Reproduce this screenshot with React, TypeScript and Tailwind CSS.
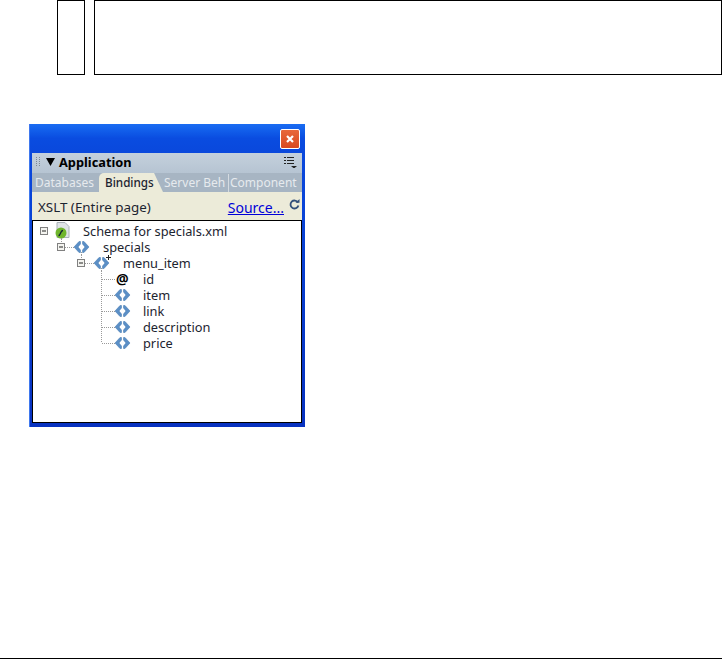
import React from 'react';

const uiFont = "font-['Noto_Sans','DejaVu_Sans',sans-serif]";

const Expander = ({ x }: { x: number }) => (
  <g>
    <rect x={x + 0.5} y={4.5} width={7} height={7} fill="#f4f4f0" stroke="#808080" />
    <line x1={x + 2} x2={x + 6} y1={8} y2={8} stroke="#222" />
  </g>
);

const Dots = ({ x1, y1, x2, y2 }: { x1: number; y1: number; x2: number; y2: number }) => (
  <line x1={x1} y1={y1} x2={x2} y2={y2} stroke="#9a9a9a" strokeDasharray="1 1" />
);

const Tag = ({ x }: { x: number }) => (
  <g fill="#5b8fc6" stroke="#3f74ae" strokeWidth={0.5}>
    <polygon points={`${x},8 ${x + 5},2.5 ${x + 6.5},2.5 ${x + 6.5},5 ${x + 4},8 ${x + 6.5},11 ${x + 6.5},13.5 ${x + 5},13.5`} />
    <polygon points={`${x + 15},8 ${x + 10},2.5 ${x + 8.5},2.5 ${x + 8.5},5 ${x + 11},8 ${x + 8.5},11 ${x + 8.5},13.5 ${x + 10},13.5`} />
  </g>
);

const SchemaGlyph = () => (
  <svg width={50} height={16} className="shrink-0 overflow-visible">
    <Expander x={7} />
    <path d="M24 -0.5h8l4 4v11h-12z" fill="#dfe3e6" stroke="#a9b0b6" />
    <circle cx={28} cy={10} r={5.5} fill="#6fb52c" />
    <path d="M25.5 12.5c2.5 0 1.5-5 4.5-5" fill="none" stroke="#123" strokeWidth={1.3} />
    <Dots x1={28.5} y1={15} x2={28.5} y2={16} />
  </svg>
);

const SpecialsGlyph = () => (
  <svg width={70} height={16} className="shrink-0 overflow-visible">
    <Dots x1={28.5} y1={0} x2={28.5} y2={4} />
    <Expander x={24} />
    <Dots x1={32} y1={8.5} x2={42} y2={8.5} />
    <Tag x={41} />
    <Dots x1={48.5} y1={13} x2={48.5} y2={16} />
  </svg>
);

const MenuItemGlyph = () => (
  <svg width={90} height={16} className="shrink-0 overflow-visible">
    <Dots x1={48.5} y1={0} x2={48.5} y2={4} />
    <Expander x={44} />
    <Dots x1={52} y1={8.5} x2={62} y2={8.5} />
    <Tag x={61} />
    <path d="M75.5 0v5M73 2.5h5" stroke="#222" fill="none" />
    <Dots x1={68.5} y1={13} x2={68.5} y2={16} />
  </svg>
);

const ChildGlyph = ({ attr, last }: { attr?: boolean; last?: boolean }) => (
  <svg width={110} height={16} className="shrink-0 overflow-visible">
    <Dots x1={68.5} y1={0} x2={68.5} y2={last ? 8 : 16} />
    <Dots x1={69} y1={8.5} x2={82} y2={8.5} />
    {attr ? null : <Tag x={82} />}
  </svg>
);

const Row = ({ glyph, label, at }: { glyph: React.ReactNode; label: string; at?: boolean }) => (
  <div className="relative flex h-4 items-center">
    {glyph}
    {at && <span className="absolute left-[83px] top-0 text-[14px] leading-4 font-bold text-black">@</span>}
    <span className="text-[12.8px] leading-4 whitespace-nowrap text-[#1c2430]">{label}</span>
  </div>
);

function Tabs() {
  return (
    <div className="flex h-[19px] items-end overflow-hidden bg-[#a7b5c3] pl-[3px] text-[12px] leading-[18px] whitespace-nowrap text-[#e6eaee]">
      <span className="w-[64px]">Databases</span>
      <span className="h-[19px] w-[64px] rounded-tl-[5px] bg-[#ecebd9] pl-[6px] text-[11.7px] font-medium text-[#1c2430] [clip-path:polygon(0_0,86%_0,100%_100%,0_100%)]">Bindings</span>
      <span className="ml-[1px] w-[65px] border-r border-[#d5dbe1]">Server Beh</span>
      <span className="ml-[1px]">Component</span>
    </div>
  );
}

export default function App() {
  return (
    <div className={`flex h-[659px] flex-col bg-white ${uiFont}`}>
      <div className="flex h-[75px] gap-[9px] pl-[57px]">
        <div className="w-[28px] border border-black" />
        <div className="flex-1 border border-black" />
      </div>

      <div className="mt-[49px] ml-[29px] flex h-[303px] w-[276px] flex-col border-l border-[#3f78ee] bg-gradient-to-b from-[#0a4ae0] to-[#0832c0] pr-[3px] pl-[2px] pb-[4px]">
        <div className="-mr-[3px] -ml-[2px] flex h-[29px] shrink-0 items-center justify-end bg-gradient-to-b from-[#1a6cf2] via-[#0a4ce0] to-[#0a48dc] pr-[5px]">
          <div className="flex h-[20px] w-[20px] items-center justify-center rounded-[2px] border border-white bg-gradient-to-b from-[#e8683a] to-[#d8481f]">
            <svg width={10} height={10} viewBox="0 0 10 10">
              <path d="M2 2l6 6M8 2l-6 6" stroke="#fff" strokeWidth={2.2} />
            </svg>
          </div>
        </div>

        <div className="flex h-[20px] shrink-0 items-center bg-gradient-to-b from-[#c4d0dc] to-[#b6c4d2] pb-[2px] pl-[4px] pr-[5px]">
          <svg width={6} height={12} className="shrink-0">
            <path d="M0.5 1v10M3.5 1v10" stroke="#7d8894" strokeDasharray="1 1" />
          </svg>
          <svg width={9} height={8} className="ml-[4px] shrink-0">
            <path d="M0 0h9l-4.5 8z" fill="#000" />
          </svg>
          <span className="ml-[4px] text-[12.8px] leading-none font-bold text-black">Application</span>
          <svg width={13} height={12} className="ml-auto shrink-0">
            <path d="M0 1.5h2M0 4.5h2M0 7.5h2M3 1.5h7M3 4.5h7M3 7.5h7" stroke="#222" />
            <path d="M7 10h6l-3 2.5z" fill="#222" />
          </svg>
        </div>

        <Tabs />

        <div className="flex h-[28px] shrink-0 items-center bg-[#ecebd9] pt-[2px] pl-[6px] pr-[2px] text-[13.4px] text-[#1c2430]">
          <span>XSLT (Entire page)</span>
          <span className="ml-auto text-[14px] text-[#0000d8] underline">Source...</span>
          <svg width={11} height={11} viewBox="0 0 11 11" className="mb-[6px] ml-[5px] shrink-0">
            <path d="M9 3.5A4 4 0 1 0 9.4 6.5" fill="none" stroke="#33507a" strokeWidth={1.8} />
            <path d="M6.5 3.8h4V0z" fill="#33507a" />
          </svg>
        </div>

        <div className="flex min-h-0 flex-1 flex-col border border-black bg-white pt-[2px]">
          <Row glyph={<SchemaGlyph />} label="Schema for specials.xml" />
          <Row glyph={<SpecialsGlyph />} label="specials" />
          <Row glyph={<MenuItemGlyph />} label="menu_item" />
          <Row glyph={<ChildGlyph attr />} label="id" at />
          <Row glyph={<ChildGlyph />} label="item" />
          <Row glyph={<ChildGlyph />} label="link" />
          <Row glyph={<ChildGlyph />} label="description" />
          <Row glyph={<ChildGlyph last />} label="price" />
        </div>
      </div>

      <div className="mt-auto h-px bg-black" />
    </div>
  );
}
